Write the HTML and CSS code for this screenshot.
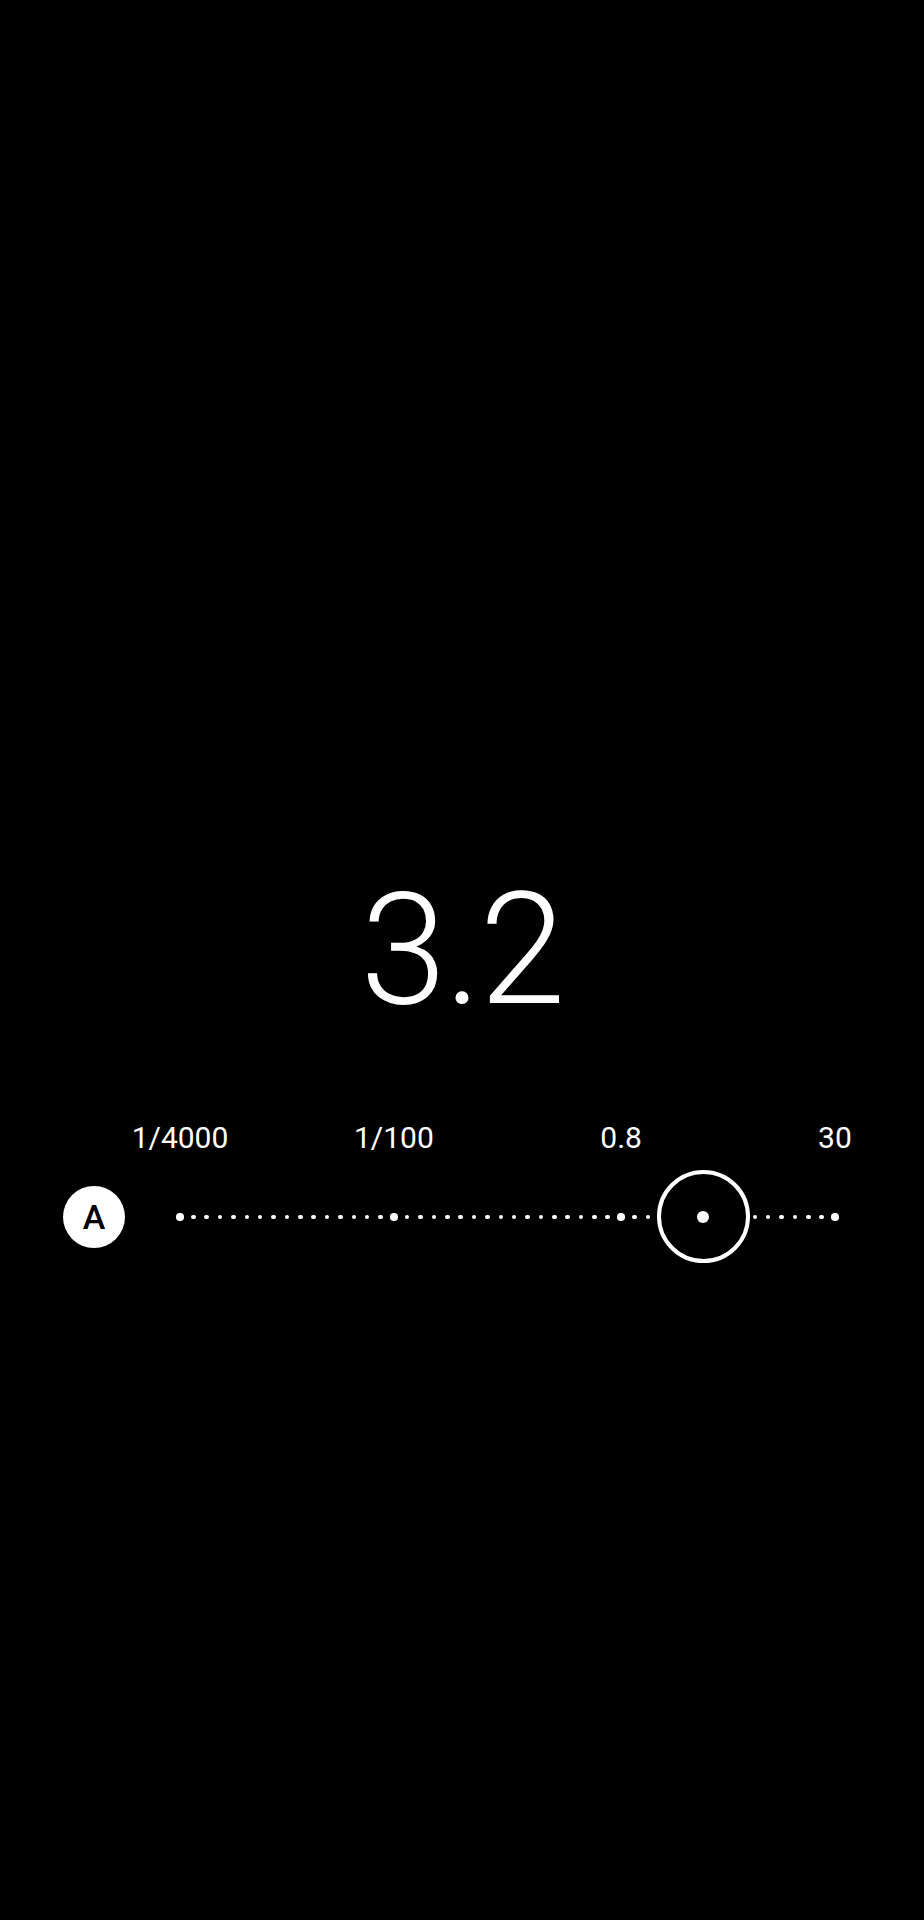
FILE: index.html
```html
<!DOCTYPE html>
<html lang="en">
<head>
<meta charset="utf-8">
<title>Shutter speed</title>
<link rel="stylesheet" href="styles.css">
</head>
<body>
<main class="screen">
  <div class="value">3.2</div>
  <div class="labels">
    <span class="label l1">1/4000</span>
    <span class="label l2">1/100</span>
    <span class="label l3">0.8</span>
    <span class="label l4">30</span>
  </div>
  <div class="slider">
    <div class="auto">A</div>
    <div class="track" id="track">
      <div class="thumb"><span class="thumb-dot"></span></div>
    </div>
  </div>
</main>
<script>
  (function () {
    var track = document.getElementById('track');
    var big = [0, 16, 33, 49];
    for (var i = 0; i < 50; i++) {
      var cell = document.createElement('span');
      cell.className = 'cell';
      var dot = document.createElement('span');
      dot.className = big.indexOf(i) >= 0 ? 'dot big' : 'dot';
      cell.appendChild(dot);
      track.appendChild(cell);
    }
  })();
</script>
</body>
</html>
```

FILE: styles.css
```css
html, body {
  margin: 0;
  padding: 0;
  background: #000;
}

body {
  width: 924px;
  height: 1920px;
  overflow: hidden;
  color: #fff;
  font-family: Roboto, "Liberation Sans", sans-serif;
}

.screen {
  display: flex;
  flex-direction: column;
  padding-top: 873px;
}

.value {
  font-size: 155px;
  line-height: 155px;
  height: 155px;
  font-weight: 300;
  text-align: center;
  letter-spacing: -2px;
}

.labels {
  margin-top: 95px;
  margin-left: 173.33px;
  width: 668.35px;
  display: grid;
  grid-template-columns: repeat(50, 1fr);
  height: 30px;
}

.label {
  grid-row: 1;
  width: 0;
  justify-self: center;
  display: flex;
  justify-content: center;
  white-space: nowrap;
  font-size: 30px;
  line-height: 30px;
}

.l1 { grid-column: 1; }
.l2 { grid-column: 17; }
.l3 { grid-column: 34; }
.l4 { grid-column: 50; }

.slider {
  margin-top: 17px;
  height: 94px;
  display: flex;
  align-items: center;
  padding-left: 63px;
}

.auto {
  width: 62px;
  height: 62px;
  border-radius: 50%;
  background: #fff;
  color: #000;
  display: flex;
  align-items: center;
  justify-content: center;
  font-size: 34px;
  font-weight: 500;
  line-height: 1;
  margin-right: 48.33px;
}

.track {
  position: relative;
  width: 668.35px;
  height: 94px;
  display: grid;
  grid-template-columns: repeat(50, 1fr);
  align-items: center;
}

.cell {
  display: flex;
  justify-content: center;
  align-items: center;
}

.dot {
  width: 4.5px;
  height: 4.5px;
  border-radius: 50%;
  background: #fff;
}

.dot.big {
  width: 7.5px;
  height: 7.5px;
}

.thumb {
  position: absolute;
  left: 483.5px;
  top: 0;
  width: 85px;
  height: 85px;
  border: 4px solid #fff;
  border-radius: 50%;
  background: #000;
  display: flex;
  align-items: center;
  justify-content: center;
  z-index: 2;
}

.thumb-dot {
  width: 12px;
  height: 12px;
  border-radius: 50%;
  background: #fff;
}
```
